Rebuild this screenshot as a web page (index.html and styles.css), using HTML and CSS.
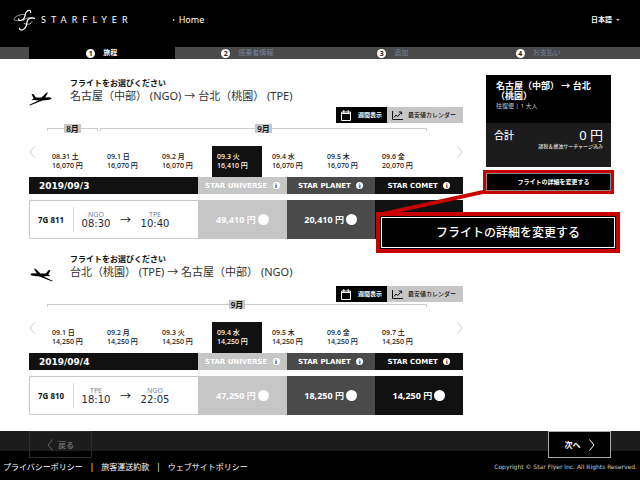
FILE: index.html
```html
<!DOCTYPE html>
<html lang="ja">
<head>
<meta charset="utf-8">
<meta name="viewport" content="width=device-width, initial-scale=1">
<title>STARFLYER</title>
<link rel="stylesheet" href="styles.css">
</head>
<body>
<svg class="defs" aria-hidden="true">
  <symbol id="plane" viewBox="0 0 24 14">
    <path d="M2.5 2 L4.6 2.2 L7 5.6 L12.5 5.6 L17.5 0.8 L19 0.6 L16.2 5.4 L19.5 5.2 Q22.5 5.2 22.6 6.6 Q22 7.8 18.5 8 L13.5 8.6 L0.8 13.4 L0.4 12.8 L9.5 8.6 L5.5 7.9 L2.5 8.2 L4.6 6.6 Z"/>
  </symbol>
  <symbol id="calendar" viewBox="0 0 10 11">
    <path d="M0.5 2h9v8.5h-9z M0.5 3.5h9 M2.8 0v3 M7.2 0v3" fill="none" stroke="currentColor"/>
  </symbol>
  <symbol id="chart" viewBox="0 0 11 9">
    <path d="M0.5 0v8.5h10.5 M2 6.5l2-2.5 1.8 1.5 3.4-4 M6.8 1h2.8v2.4" fill="none" stroke="currentColor"/>
  </symbol>
  <symbol id="left" viewBox="0 0 6 12"><path d="M5.5 0.5L1 6l4.500 5.500" fill="none" stroke="currentColor"/></symbol>
  <symbol id="right" viewBox="0 0 6 12"><path d="M0.500 0.500L5 6l-4.500 5.500" fill="none" stroke="currentColor"/></symbol>
</svg>

<header class="site-header">
  <a class="brand" href="#">
    <svg class="brand-mark" viewBox="0 0 22 23" aria-hidden="true">
      <g fill="none" stroke="#fff" stroke-linecap="round">
        <path d="M17.500 3.500C18.500 1 15 0.500 13 3.500C11.500 6 12.500 8 10.500 10C8.500 12 5.500 12 5.500 9.800" stroke-width="1.200"/>
        <path d="M12 5.500C8 5 3.500 6.500 1 9.500C0.500 11.500 4 12 7 11.500" stroke-width="0.600"/>
        <path d="M21.500 9.300C19 8.500 15.500 9 14.500 11.500C13.500 14 14 17 12 19.200C9.500 22 6 21.500 6.500 19" stroke-width="1.200"/>
        <path d="M10.500 11.500C13 8.500 17.500 8 21 9.300" stroke-width="0.600"/>
        <path d="M11 14.500C14 16 18.500 15.500 19 12.800" stroke-width="0.700"/>
      </g>
    </svg>
    <span class="brand-name">STARFLYER</span>
  </a>
  <nav class="site-nav"><a href="#">Home</a></nav>
  <button class="language" type="button">日本語</button>
</header>

<ol class="steps">
  <li class="step step--current"><span class="step-number">1</span>旅程</li>
  <li class="step"><span class="step-number">2</span>搭乗者情報</li>
  <li class="step"><span class="step-number">3</span>追加</li>
  <li class="step"><span class="step-number">4</span>お支払い</li>
</ol>

<main class="main">
  <div class="flights">
    <section class="flight">
      <div class="flight-head">
        <svg class="plane" aria-hidden="true"><use href="#plane"/></svg>
        <div>
          <h2 class="flight-title">フライトをお選びください</h2>
          <p class="flight-route">名古屋（中部） (NGO) → 台北（桃園） (TPE)</p>
        </div>
      </div>
      <div class="view-switch">
        <button class="view view--week" type="button"><svg class="icon-calendar" aria-hidden="true"><use href="#calendar"/></svg>週間表示</button>
        <button class="view view--lowest" type="button"><svg class="icon-chart" aria-hidden="true"><use href="#chart"/></svg>最安値カレンダー</button>
      </div>
      <div class="months">
        <div class="month month--short"><span>8月</span></div>
        <div class="month"><span>9月</span></div>
      </div>
      <div class="days">
        <button class="pager" type="button" aria-label="前へ"><svg class="chevron"><use href="#left"/></svg></button>
        <button class="day" type="button">08.31 土<br>16,070 円</button>
        <button class="day" type="button">09.1 日<br>16,070 円</button>
        <button class="day" type="button">09.2 月<br>16,070 円</button>
        <button class="day day--selected" type="button">09.3 火<br>16,410 円</button>
        <button class="day" type="button">09.4 水<br>16,070 円</button>
        <button class="day" type="button">09.5 木<br>16,070 円</button>
        <button class="day" type="button">09.6 金<br>20,070 円</button>
        <button class="pager pager--next" type="button" aria-label="次へ"><svg class="chevron"><use href="#right"/></svg></button>
      </div>
      <table class="fares">
        <thead>
          <tr>
            <th class="fare-date">2019/09/3</th>
            <th class="universe">STAR UNIVERSE <span class="info">i</span></th>
            <th class="planet">STAR PLANET <span class="info">i</span></th>
            <th class="comet">STAR COMET <span class="info">i</span></th>
          </tr>
        </thead>
        <tbody>
          <tr>
            <td class="itinerary">
              <div class="itinerary-row">
                <b class="flight-number">7G 811</b>
                <div class="stop"><span>NGO</span><time>08:30</time></div>
                <span class="to">→</span>
                <div class="stop"><span>TPE</span><time>10:40</time></div>
              </div>
            </td>
            <td class="universe"><label class="price">49,410 円<input type="radio" name="outbound"></label></td>
            <td class="planet"><label class="price">20,410 円<input type="radio" name="outbound"></label></td>
            <td class="comet"></td>
          </tr>
        </tbody>
      </table>
    </section>

    <section class="flight flight--return">
      <div class="flight-head">
        <svg class="plane" aria-hidden="true"><use href="#plane"/></svg>
        <div>
          <h2 class="flight-title">フライトをお選びください</h2>
          <p class="flight-route">台北（桃園） (TPE) → 名古屋（中部） (NGO)</p>
        </div>
      </div>
      <div class="view-switch">
        <button class="view view--week" type="button"><svg class="icon-calendar" aria-hidden="true"><use href="#calendar"/></svg>週間表示</button>
        <button class="view view--lowest" type="button"><svg class="icon-chart" aria-hidden="true"><use href="#chart"/></svg>最安値カレンダー</button>
      </div>
      <div class="months">
        <div class="month"><span>9月</span></div>
      </div>
      <div class="days">
        <button class="pager" type="button" aria-label="前へ"><svg class="chevron"><use href="#left"/></svg></button>
        <button class="day" type="button">09.1 日<br>14,250 円</button>
        <button class="day" type="button">09.2 月<br>14,250 円</button>
        <button class="day" type="button">09.3 火<br>14,250 円</button>
        <button class="day day--selected" type="button">09.4 水<br>14,250 円</button>
        <button class="day" type="button">09.5 木<br>14,250 円</button>
        <button class="day" type="button">09.6 金<br>14,250 円</button>
        <button class="day" type="button">09.7 土<br>14,250 円</button>
        <button class="pager pager--next" type="button" aria-label="次へ"><svg class="chevron"><use href="#right"/></svg></button>
      </div>
      <table class="fares">
        <thead>
          <tr>
            <th class="fare-date">2019/09/4</th>
            <th class="universe">STAR UNIVERSE <span class="info">i</span></th>
            <th class="planet">STAR PLANET <span class="info">i</span></th>
            <th class="comet">STAR COMET <span class="info">i</span></th>
          </tr>
        </thead>
        <tbody>
          <tr>
            <td class="itinerary">
              <div class="itinerary-row">
                <b class="flight-number">7G 810</b>
                <div class="stop"><span>TPE</span><time>18:10</time></div>
                <span class="to">→</span>
                <div class="stop"><span>NGO</span><time>22:05</time></div>
              </div>
            </td>
            <td class="universe"><label class="price">47,250 円<input type="radio" name="return"></label></td>
            <td class="planet"><label class="price">18,250 円<input type="radio" name="return"></label></td>
            <td class="comet"><label class="price">14,250 円<input type="radio" name="return"></label></td>
          </tr>
        </tbody>
      </table>
    </section>
  </div>

  <aside class="summary">
    <div class="summary-trip">
      <h3>名古屋（中部） → 台北（桃園）</h3>
      <p>往復便 | 1 大人</p>
    </div>
    <div class="summary-total">
      <span class="total-label">合計</span>
      <span class="total-price">0 円</span>
      <small>諸税＆燃油サーチャージ込み</small>
    </div>
    <div class="change">
      <button class="change-button" type="button">フライトの詳細を変更する</button>
      <svg class="callout-line" viewBox="0 0 112 28" aria-hidden="true"><path d="M4 24L109 1V5L22 24Z" fill="#c80000"/></svg>
      <div class="callout"><span>フライトの詳細を変更する</span></div>
    </div>
  </aside>
</main>

<div class="actions">
  <button class="action action--back" type="button"><svg class="chevron"><use href="#left"/></svg>戻る</button>
  <button class="action action--next" type="button">次へ<svg class="chevron"><use href="#right"/></svg></button>
</div>

<footer class="site-footer">
  <nav class="footer-links">
    <a href="#">プライバシーポリシー</a><span>|</span><a href="#">旅客運送約款</a><span>|</span><a href="#">ウェブサイトポリシー</a>
  </nav>
  <p class="copyright">Copyright © Star Flyer Inc. All Rights Reserved.</p>
</footer>
</body>
</html>
```
FILE: styles.css
```css
* { box-sizing: border-box; }

body {
  display: flex;
  flex-direction: column;
  min-height: 100vh;
  margin: 0;
  background: #fff;
  color: #111;
  font-family: "Noto Sans", "Noto Sans CJK JP", sans-serif;
  font-size: 8px;
  line-height: 10px;
}

h2, h3, p, ol { margin: 0; padding: 0; }
a { color: inherit; text-decoration: none; }
button { margin: 0; padding: 0; border: 0; background: none; color: inherit; font: inherit; }
.defs { display: none; }

/* Header */
.site-header {
  display: flex;
  align-items: center;
  height: 47px;
  padding: 0 20px 7px 13px;
  background: #000;
  color: #fff;
}
.brand { display: flex; align-items: center; gap: 6px; }
.brand-mark { width: 22px; height: 23px; }
.brand-name { font: 9px/12px Lato, sans-serif; letter-spacing: 5px; }
.site-nav { flex: 1; margin-left: 40px; font-size: 9px; }
.site-nav a { display: flex; align-items: center; gap: 4px; }
.site-nav a::before {
  content: "";
  border: 1px solid transparent;
  border-left: 2px solid #fff;
  border-right: 0;
}
.language { display: flex; align-items: center; gap: 4px; font-size: 7px; font-weight: 700; }
.language::after {
  content: "";
  border: 2px solid transparent;
  border-top-color: #bbb;
  border-bottom: 0;
}

/* Progress */
.steps {
  display: grid;
  grid-template-columns: repeat(4, 1fr);
  padding: 0 29px;
  background: #4a4a4a;
  list-style: none;
}
.step {
  display: flex;
  align-items: center;
  justify-content: center;
  gap: 8px;
  height: 12px;
  color: #76839c;
  font-size: 7px;
}
.step--current { background: #000; color: #fff; font-weight: 700; }
.step-number {
  width: 9px;
  height: 9px;
  border-radius: 50%;
  background: #fff;
  color: #222;
  font-size: 7px;
  font-weight: 700;
  line-height: 9px;
  text-align: center;
}

/* Page columns */
.main {
  display: grid;
  grid-template-columns: 434fr 125fr;
  gap: 23px;
  padding: 16px 29px 4px;
}

/* Flight section */
.flight { height: 176px; padding-top: 2px; }
.flight-head { display: grid; grid-template-columns: 41px 1fr; align-items: end; }
.plane { width: 24px; height: 14px; margin-bottom: -3px; }
.flight--return .plane { transform: scaleX(-1); }
.flight-title { font-size: 8px; line-height: 12px; }
.flight-route { color: #333; font-size: 11px; line-height: 14px; }

.view-switch { display: flex; justify-content: flex-end; margin-top: 4px; }
.view { display: flex; align-items: center; height: 16px; font-size: 6px; }
.view--week { gap: 7px; padding: 0 5px; background: #000; color: #fff; font-weight: 700; }
.view--lowest { gap: 5px; padding: 0 7px 0 5px; background: #c6c6c6; font-weight: 500; }
.icon-calendar { width: 10px; height: 11px; }
.icon-chart { width: 11px; height: 9px; }

.months { display: flex; gap: 2px; margin: 1px 36px 0 18px; }
.month {
  position: relative;
  flex: 327;
  height: 9px;
  text-align: center;
}
.month--short { flex: 51; }
.month::before {
  content: "";
  position: absolute;
  inset: 4px 0 2px;
  border: 1px solid #ccc;
  border-bottom: 0;
}
.month span {
  position: relative;
  display: inline-block;
  padding: 0 2px;
  background: #c6c6c6;
  font-weight: 600;
  line-height: 9px;
  vertical-align: top;
}

.flight--return .view-switch { margin-top: 7px; }
.flight--return .months { margin-top: -2px; }

.days {
  display: grid;
  grid-template-columns: 18px repeat(7, 1fr) 31px;
  height: 31px;
  margin-top: 13px;
}
.day {
  margin-right: 5px;
  padding: 0 0 2px 5px;
  font-size: 7px;
  font-weight: 500;
  line-height: 9px;
  text-align: left;
  white-space: nowrap;
}
.day--selected { background: #111; color: #fff; }
.pager { align-self: start; height: 12px; color: #ccc; text-align: left; }
.pager--next { text-align: right; }
.chevron { display: inline-block; width: 6px; height: 12px; }

/* Fare table */
.fares { width: 100%; border-spacing: 0; table-layout: fixed; }
.fares th {
  height: 17px;
  padding: 0;
  color: #fff;
  font: bold 7px/10px "DejaVu Sans", sans-serif;
  white-space: nowrap;
}
.fares .fare-date {
  width: 39%;
  padding-left: 10px;
  background: #111;
  font-size: 9px;
  text-align: left;
}
.fares td { height: 39px; padding: 0; color: #fff; }
.fares tbody::before { content: ""; display: block; height: 6px; }
.universe { background: #c6c6c6; }
.planet { background: #4a4a4a; }
.comet { background: #111; }
.info {
  display: inline-block;
  width: 7px;
  height: 7px;
  margin-left: 3px;
  border-radius: 50%;
  background: #fff;
  color: #333;
  font-size: 6px;
  line-height: 7px;
  text-align: center;
}
.fares .itinerary { border: 1px solid #c6c6c6; border-right: 0; border-radius: 2px 0 0 2px; color: #111; }
.itinerary-row { display: flex; align-items: center; padding-left: 8px; }
.flight-number { width: 36px; line-height: 25px; border-right: 1px solid #ddd; }
.stop { width: 44px; text-align: center; }
.stop span { display: block; color: #7482a0; font-size: 7px; line-height: 9px; }
.stop time { display: block; color: #222838; font: 10px/10px "DejaVu Sans", sans-serif; }
.to { width: 15px; font-size: 11px; text-align: center; }
.price {
  display: flex;
  align-items: center;
  justify-content: center;
  font-size: 9px;
  font-weight: 700;
}
.price input {
  appearance: none;
  width: 11px;
  height: 11px;
  margin: 0 0 0 2px;
  border-radius: 50%;
  background: #fff;
}

/* Summary */
.summary { color: #fff; }
.summary-trip { min-height: 48px; padding: 6px 10px; background: #000; }
.summary-trip h3 { font-size: 9px; line-height: 10px; }
.summary-trip p { color: #ccc; font-size: 6px; line-height: 10px; }
.summary-total {
  display: grid;
  grid-template-columns: auto 1fr;
  align-content: start;
  min-height: 44px;
  padding: 5px 8px;
  background: #1c1c1c;
}
.total-label { font-size: 10px; font-weight: 500; line-height: 15px; }
.total-price { font-size: 13px; line-height: 15px; text-align: right; }
.summary-total small { grid-column: 1 / -1; font-size: 5px; line-height: 7px; text-align: right; }

.change { position: relative; margin: 3px -3px 0; border: 3px solid #c80000; background: #000; }
.change-button {
  display: block;
  width: 100%;
  height: 18px;
  padding-left: 10px;
  border: 1px solid #888;
  font-size: 6px;
  font-weight: 700;
}
.callout-line { position: absolute; top: 16px; right: 125px; width: 112px; height: 28px; }
.callout {
  position: absolute;
  top: 39px;
  right: -9px;
  width: 244px;
  padding: 1px;
  border: 4px solid #c80000;
  background: #000;
}
.callout span {
  display: block;
  border: 1px solid #fff;
  font-size: 12px;
  font-weight: 500;
  line-height: 29px;
  text-align: center;
  padding-left: 20px;
}

/* Bottom bars */
.actions {
  display: flex;
  justify-content: space-between;
  height: 20px;
  margin-top: auto;
  padding: 0 29px;
  background: #1c1c1c;
}
.action {
  position: relative;
  display: flex;
  align-items: center;
  justify-content: center;
  width: 63px;
  height: 27px;
  font-weight: 700;
}
.action--back { gap: 5px; border: 1px solid #2c2c2c; color: #666; }
.action--next { gap: 8px; border: 1px solid #aaa; background: #000; color: #fff; }
.site-footer {
  display: flex;
  justify-content: space-between;
  height: 29px;
  padding: 11px 3px 0;
  background: #000;
  color: #fff;
}
.footer-links { display: flex; gap: 7px; }
.copyright { color: #ccc; font: 6px/10px "DejaVu Sans", sans-serif; }
```
